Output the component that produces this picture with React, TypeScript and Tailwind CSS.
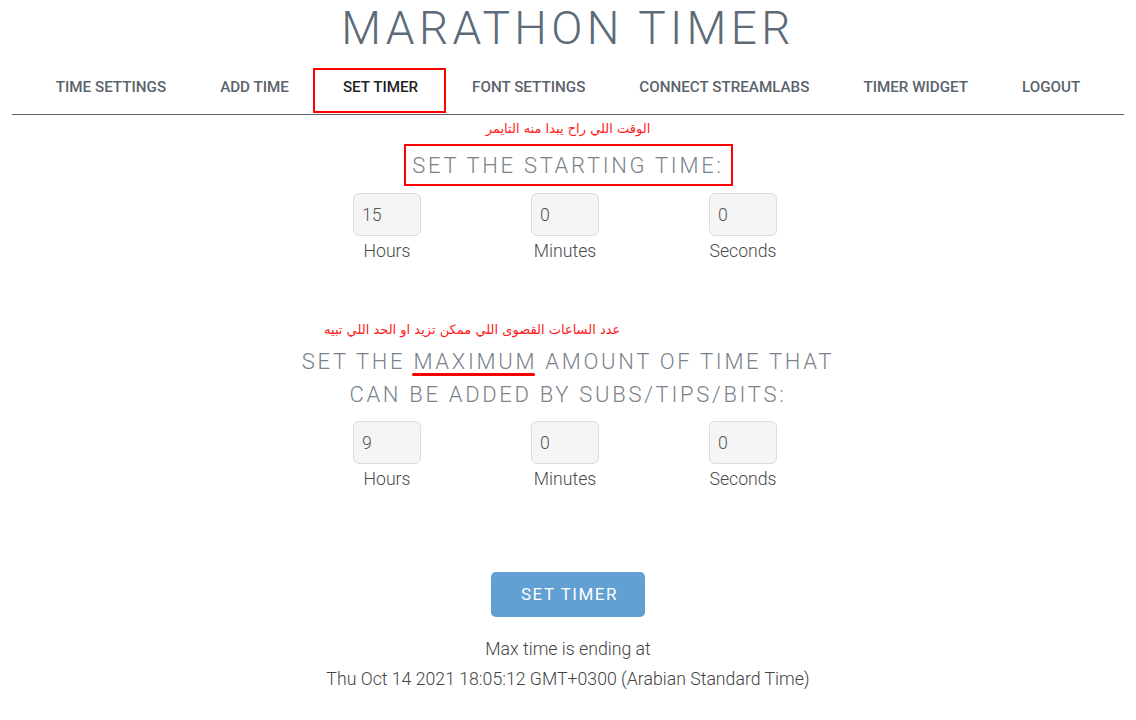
import React from 'react';

const navItems = ['TIME SETTINGS', 'ADD TIME', 'SET TIMER', 'FONT SETTINGS', 'CONNECT STREAMLABS', 'TIMER WIDGET', 'LOGOUT'];

function TimeInputs({ hours }: { hours: string }) {
  const fields = [
    { value: hours, label: 'Hours' },
    { value: '0', label: 'Minutes' },
    { value: '0', label: 'Seconds' },
  ];
  return (
    <div className="flex justify-center mr-[6px]">
      {fields.map((f) => (
        <div key={f.label} className="w-[178px] flex flex-col items-center">
          <input
            readOnly
            value={f.value}
            className="w-[68px] h-[43px] bg-[#f5f5f5] border border-[#dcdcdc] rounded-[6px] pl-[8px] text-[17.7px] font-light text-[#555] outline-none"
          />
          <div className="mt-[5px] text-[17.7px] leading-[20px] font-light text-[#4a4a4a]">{f.label}</div>
        </div>
      ))}
    </div>
  );
}

export default function App() {
  return (
    <div className="w-[1136px] h-[720px] bg-white font-['Roboto',sans-serif] overflow-hidden">
      {/* Title */}
      <h1 className="h-[56px] text-center text-[46px] leading-[56px] font-light tracking-[4.3px] text-[#5d6b78]">
        MARATHON TIMER
      </h1>

      {/* Nav */}
      <nav className="mx-[12px] h-[59px] pt-[4px] border-b border-[#5f6368] flex justify-center gap-[54px]">
        {navItems.map((item) => (
          <div key={item} className="relative flex items-center">
            <span className={`text-[15.2px] font-medium ${item === 'SET TIMER' ? 'text-[#1f1f1f]' : 'text-[#5a636c]'}`}>{item}</span>
            {item === 'SET TIMER' && (
              <span className="absolute top-[8px] bottom-[1px] -left-[30px] -right-[28px] border-2 border-[#ff0000]" />
            )}
          </div>
        ))}
      </nav>

      {/* Starting time */}
      <div className="mt-[4px] text-center text-[13px] leading-[20px] text-[#ff1a1a] font-['DejaVu_Sans',sans-serif]" dir="rtl">
        الوقت اللي راح يبدا منه التايمر
      </div>
      <div className="mt-[5px] flex justify-center">
        <div className="w-[329px] h-[42px] border-2 border-[#ff0000] flex items-center justify-center">
          <span className="text-[22px] font-light tracking-[2.7px] text-[#7b838c]">SET THE STARTING TIME:</span>
        </div>
      </div>
      <div className="mt-[7px]">
        <TimeInputs hours="15" />
      </div>

      {/* Maximum time */}
      <div className="mt-[59px] flex justify-center">
        <div className="w-[560px] text-left pl-[36px] text-[13px] leading-[20px] text-[#ff1a1a] font-['DejaVu_Sans',sans-serif]" dir="ltr">
          <span dir="rtl">عدد الساعات القصوى اللي ممكن تزيد او الحد اللي تبيه</span>
        </div>
      </div>
      <div className="mt-[5px] flex justify-center">
        <div className="w-[560px] text-center text-[22px] leading-[33px] font-light tracking-[2.7px] text-[#7b838c]">
          SET THE{' '}
          <span className="relative inline-block">
            MAXIMUM
            <span className="absolute left-[-1px] right-[2px] bottom-[2px] h-[3px] rounded-full bg-[#ff0000]" />
          </span>{' '}
          AMOUNT OF TIME THAT CAN BE ADDED BY SUBS/TIPS/BITS:
        </div>
      </div>
      <div className="mt-[10px]">
        <TimeInputs hours="9" />
      </div>

      {/* Button + info */}
      <div className="mt-[83px] flex flex-col items-center">
        <button className="w-[154px] h-[45px] bg-[#629fd3] rounded-[5px] text-white text-[17px] font-normal tracking-[0.09em] pl-[3px]">
          SET TIMER
        </button>
        <div className="mt-[17px] text-[17.7px] leading-[30px] font-light text-[#444]">Max time is ending at</div>
        <div className="text-[17.7px] leading-[30px] font-light text-[#444]">Thu Oct 14 2021 18:05:12 GMT+0300 (Arabian Standard Time)</div>
      </div>
    </div>
  );
}
